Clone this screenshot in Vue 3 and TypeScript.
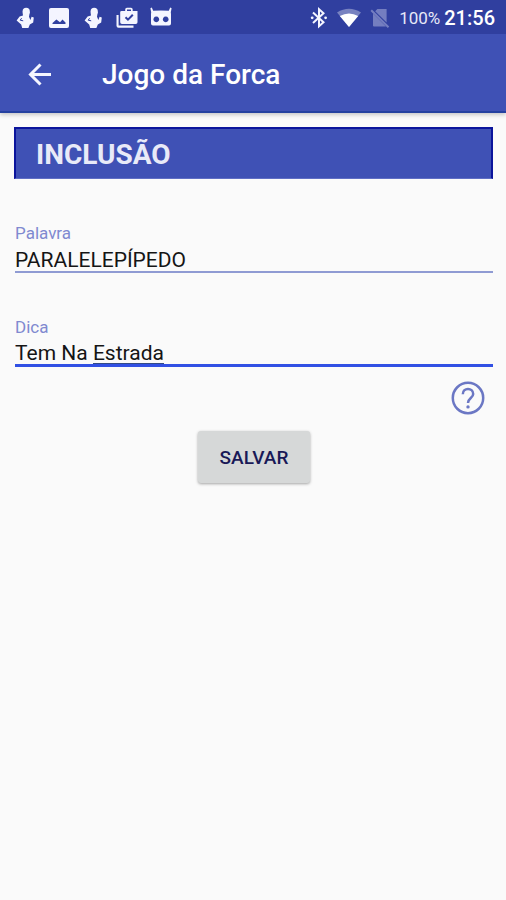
<script setup lang="ts">
import { ref } from 'vue'

const word = ref<string>('PARALELEPÍPEDO')
const hint = ref<string>('Tem Na Estrada')
</script>

<template>
  <div class="screen">
    <header>
      <div class="status">
        <div class="notices">
          <svg class="ic" viewBox="0 0 22 22" aria-hidden="true">
            <circle cx="12.2" cy="4.4" r="3.6" />
            <path d="M8.6 5.5 15.8 5 15 9.8 16.4 13 17.6 9.8 19.8 10.4 19.2 15.4 15.8 17.6 14.4 21H8.2L7.2 17.4 2.6 13.4 5.6 9.4 9 8.4Z" />
            <path class="cut thin" d="M7.6 11.2 6.2 13.2 9.2 13.8" />
          </svg>
          <svg class="ic" viewBox="0 0 22 22" aria-hidden="true">
            <path fill-rule="evenodd" d="M3 1H19a2 2 0 0 1 2 2V19a2 2 0 0 1-2 2H3a2 2 0 0 1-2-2V3a2 2 0 0 1 2-2ZM4.500 17H17.500V15.500L14.500 12.500 12 15.200 8.400 12.500 4.500 16Z" />
          </svg>
          <svg class="ic" viewBox="0 0 22 22" aria-hidden="true">
            <circle cx="12.2" cy="4.4" r="3.6" />
            <path d="M8.6 5.5 15.8 5 15 9.8 16.4 13 17.6 9.8 19.8 10.4 19.2 15.4 15.8 17.6 14.4 21H8.2L7.2 17.4 2.6 13.4 5.6 9.4 9 8.4Z" />
            <path class="cut thin" d="M7.6 11.2 6.2 13.2 9.2 13.8" />
          </svg>
          <svg class="ic" viewBox="0 0 22 22" aria-hidden="true">
            <path d="M.5 8H2.6V18.6H17.5V20.8H2.5a2 2 0 0 1-2-2Z" />
            <path fill-rule="evenodd" d="M5.5 4H9.2V2.5A1.7 1.7 0 0 1 10.9.8H15a1.7 1.7 0 0 1 1.7 1.7V4H21.5V15.2a1.8 1.8 0 0 1-1.8 1.8H6a1.8 1.8 0 0 1-1.8-1.8V5.3A1.3 1.3 0 0 1 5.5 4ZM11 2.4V4H15V2.4Z" />
            <path class="cut" d="M9.5 10.2 12 12.7 16.8 7.8" />
          </svg>
          <svg class="ic" viewBox="0 0 22 22" aria-hidden="true">
            <path fill-rule="evenodd" d="M.4 1.200 1.800.6 3.200 3.800Q11 3 18.800 3.800L20.200.6 21.600 1.200 20.800 5.200Q21 6.300 21 7.300V16.600a2 2 0 0 1-2 2H3a2 2 0 0 1-2-2V7.300Q1 6.300 1.200 5.200ZM6.300 9.500a2.900 2.900 0 1 0 .01 0ZM15.700 9.500a2.900 2.900 0 1 0 .01 0Z" />
          </svg>
        </div>
        <div class="system">
          <svg class="ic" viewBox="0 0 22 22" aria-hidden="true">
            <path class="line" d="M6 5.5 16.5 15.2 12 19.200V2.200L16.5 6.200 6 16" />
            <circle cx="5.2" cy="10.8" r="1.4" />
            <circle cx="18.6" cy="10.8" r="1.4" />
          </svg>
          <svg class="wifi" viewBox="0 0 24 20" aria-hidden="true">
            <path class="dim" d="M0 4.5Q12-3 24 4.5L12 19Z" />
            <path d="M2.8 8Q12 3 21.2 8L12 19Z" />
          </svg>
          <svg class="ic dim" viewBox="0 0 22 22" aria-hidden="true">
            <path d="M8.4 2H17.6V15.4L6.2 4.3ZM4 6.4 17 19.4H5a1 1 0 0 1-1-1Z" />
            <path class="line" d="M2.2 3.2 19.5 20.3" />
          </svg>
          <span class="battery">100%</span>
          <time class="clock">21:56</time>
        </div>
      </div>
      <div class="appbar">
        <button class="back" type="button" aria-label="Voltar">
          <svg viewBox="0 0 24 24" aria-hidden="true"><path d="M23 11.500H2.500M12.500 1.500 2.500 11.500 12.500 21.500" /></svg>
        </button>
        <h1>Jogo da Forca</h1>
      </div>
    </header>

    <main>
      <h2>INCLUSÃO</h2>
      <form @submit.prevent>
        <div class="field">
          <label for="word">Palavra</label>
          <input id="word" v-model="word" type="text" autocomplete="off" />
        </div>
        <div class="field active">
          <label for="hint">Dica</label>
          <input id="hint" v-model="hint" type="text" autocomplete="off" />
          <span class="composing"></span>
        </div>
        <button class="help" type="button" aria-label="Ajuda">
          <svg viewBox="0 0 34 34" aria-hidden="true">
            <circle class="ring" cx="17" cy="17" r="15.2" />
            <path class="ring" d="M11.8 13.2C11.8 6.2 22.2 6.2 22.2 13C22.2 17 17 17.2 17 22" />
            <circle class="dot" cx="17" cy="25.9" r="1.7" />
          </svg>
        </button>
        <button class="save" type="submit">SALVAR</button>
      </form>
    </main>
  </div>
</template>

<style>
body {
  background: #fafafa;
}
</style>

<style scoped>
.screen {
  min-height: 100vh;
  background: #fafafa;
  font-family: Roboto, "Liberation Sans", sans-serif;
}

header {
  background: #3f51b5;
  color: #fff;
  border-bottom: 2px solid #2541a0;
  box-shadow: 0 2px 4px rgba(0, 0, 0, 0.2);
}

.status {
  box-sizing: border-box;
  display: flex;
  justify-content: space-between;
  align-items: center;
  height: 34px;
  padding: 2px 11px 0 14px;
  background: #303f9f;
}

.notices {
  display: flex;
  gap: 12px;
}

.system {
  display: flex;
  align-items: center;
}

.ic {
  display: block;
  width: 22px;
  height: 22px;
  fill: #f4f5ff;
}

.wifi {
  width: 24px;
  height: 20px;
  margin: 0 8px;
  fill: #fff;
}

.dim {
  opacity: 0.35;
}

.cut {
  fill: none;
  stroke: #303f9f;
  stroke-width: 2;
}

.thin {
  stroke-width: 1;
}

.line {
  fill: none;
  stroke: #f4f5ff;
  stroke-width: 2;
}

.battery {
  margin: 0 4px 0 8px;
  font-size: 17px;
  color: #e6e8f8;
}

.clock {
  font-size: 20px;
  font-weight: 500;
}

.appbar {
  box-sizing: border-box;
  display: flex;
  align-items: center;
  height: 77px;
  padding: 5px 28px 0;
}

.back {
  width: 24px;
  height: 24px;
  padding: 0;
  border: 0;
  background: none;
  cursor: pointer;
}

.back svg {
  display: block;
  fill: none;
  stroke: #f4f5ff;
  stroke-width: 3;
}

h1 {
  margin: 0 0 0 50px;
  font-size: 28px;
  font-weight: 500;
  line-height: 32px;
}

main {
  padding: 14px 13px 14px 14px;
}

h2 {
  margin: 0;
  padding: 9px 20px 7px;
  border: 2px solid #0b149c;
  border-bottom: 1px solid #5f6ec4;
  background: #3f51b5;
  color: #e8eaf8;
  font-size: 28px;
  font-weight: 700;
  line-height: 33px;
}

form {
  display: flex;
  flex-direction: column;
  padding: 43px 0 0 1px;
}

.field {
  position: relative;
  height: 94px;
}

label {
  display: block;
  color: #8089d0;
  font-size: 17px;
  line-height: 22px;
}

input {
  display: block;
  box-sizing: border-box;
  width: 100%;
  height: 29px;
  padding: 4px 0 0;
  border: 0;
  border-bottom: 2px solid #8f9bd3;
  border-radius: 0;
  outline: none;
  background: transparent;
  color: #151515;
  font-family: inherit;
  font-size: 21px;
}

.active input {
  border-bottom: 3px solid #3150e4;
}

.active {
  height: 65px;
}

/* Mark under the word that is still being typed */
.composing {
  position: absolute;
  top: 47px;
  left: 78px;
  width: 71px;
  height: 1px;
  background: #334a86;
}

.help {
  align-self: flex-end;
  width: 34px;
  height: 34px;
  margin-right: 8px;
  padding: 0;
  border: 0;
  background: none;
  cursor: pointer;
}

.help svg {
  display: block;
}

.ring {
  fill: none;
  stroke: #6b77c4;
  stroke-width: 2.5;
}

.dot {
  fill: #6b77c4;
}

.save {
  align-self: center;
  height: 52px;
  margin-top: 16px;
  padding: 0 22px;
  border: 0;
  border-radius: 3px;
  background: #d6d8d8;
  box-shadow: 0 1px 3px rgba(0, 0, 0, 0.35);
  color: #191957;
  font-family: inherit;
  font-size: 19px;
  font-weight: 500;
  cursor: pointer;
}
</style>
